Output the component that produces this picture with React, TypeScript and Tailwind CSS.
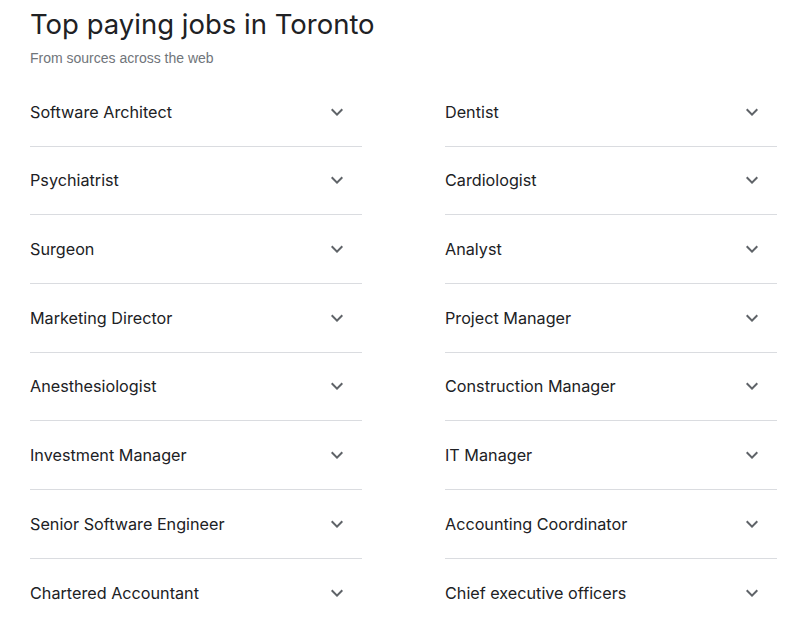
const leftJobs = [
  "Software Architect",
  "Psychiatrist",
  "Surgeon",
  "Marketing Director",
  "Anesthesiologist",
  "Investment Manager",
  "Senior Software Engineer",
  "Chartered Accountant",
];

const rightJobs = [
  "Dentist",
  "Cardiologist",
  "Analyst",
  "Project Manager",
  "Construction Manager",
  "IT Manager",
  "Accounting Coordinator",
  "Chief executive officers",
];

function ExpandIcon() {
  return (
    <svg viewBox="0 0 24 24" className="h-6 w-6 fill-[#5f6368]">
      <path d="M16.59 8.59L12 13.17 7.41 8.59 6 10l6 6 6-6z" />
    </svg>
  );
}

function JobColumn({ jobs }: { jobs: string[] }) {
  return (
    <div className="flex w-[332px] flex-col">
      {jobs.map((job, i) => (
        <div
          key={job}
          className={`flex h-[68.67px] items-center justify-between ${
            i < jobs.length - 1 ? "border-b border-[#dadce0]" : ""
          }`}
        >
          <span className="text-[16.2px] text-[#202124]">{job}</span>
          <span className="mr-[13px] flex">
            <ExpandIcon />
          </span>
        </div>
      ))}
    </div>
  );
}

export default function App() {
  return (
    <div className="min-h-screen w-full bg-white px-[30px] pt-[6px] font-['Inter',sans-serif]">
      <h1 className="text-[27.5px] font-normal leading-[36px] text-[#202124]">Top paying jobs in Toronto</h1>
      <p className="mt-[6px] font-['Liberation_Sans',Arial,sans-serif] text-[14px] leading-[20px] text-[#70757a]">
        From sources across the web
      </p>
      <div className="mt-[10px] flex gap-[83px]">
        <JobColumn jobs={leftJobs} />
        <JobColumn jobs={rightJobs} />
      </div>
    </div>
  );
}
